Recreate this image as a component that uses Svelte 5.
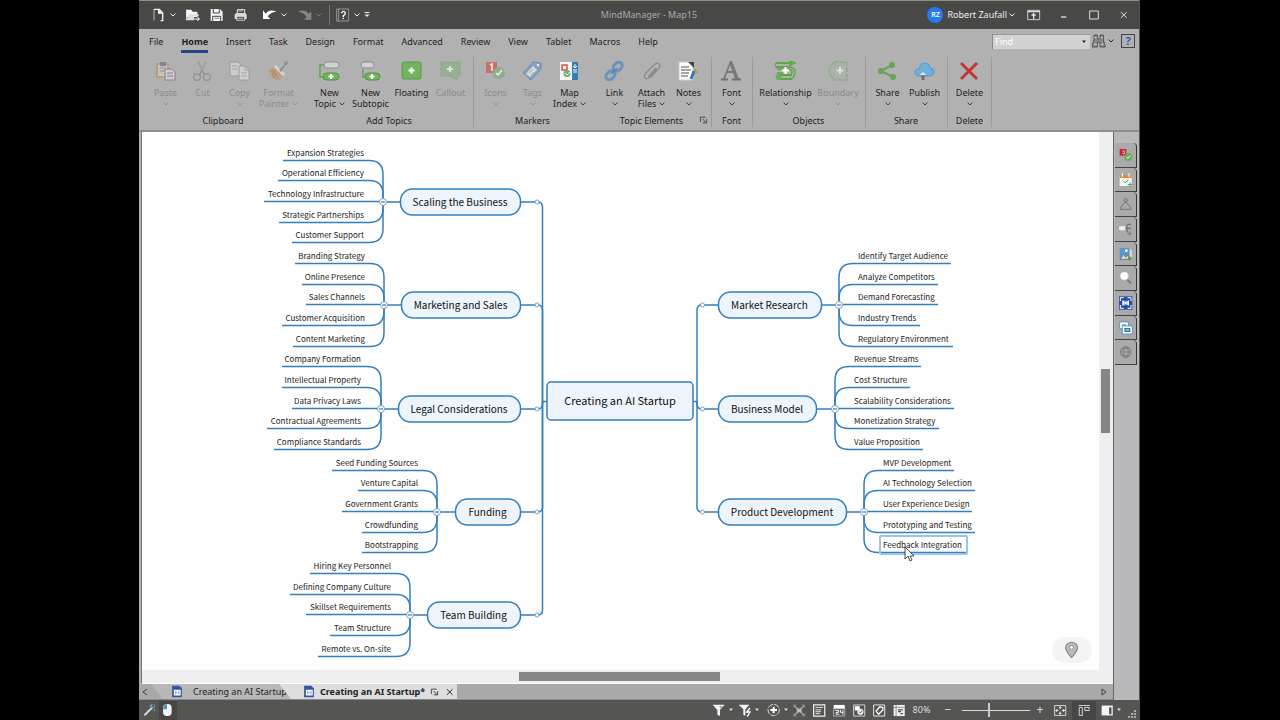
<script>
  const ICONS = {
    newdoc: '<path d="M3 1.500h8l5 5v12h-3" fill="none" stroke="#f4f4f4" stroke-width="2"/><path d="M3 1v17" stroke="#f4f4f4" stroke-width="1"/><path d="M9 1v7h7" fill="#fff"/>',
    open: '<path d="M1 2h7l2 3h7v8H1z" fill="#f4f4f4"/><path d="M1 18l3-9h15v3h-7v6z" fill="#ddd"/><path d="M1 2v16" stroke="#f4f4f4" stroke-width="1.500"/><path d="M12 16h8M17 13l3 3-3 3" fill="none" stroke="#fff" stroke-width="1.500"/>',
    save: '<path d="M1 1h14l4 4v14H1z" fill="#f1f1f1"/><path d="M5 1v6h9V1M4 19v-7h12v7" fill="none" stroke="#484846" stroke-width="1.500"/><path d="M7 15h7" stroke="#484846"/>',
    print: '<path d="M5 8V2h11v6" fill="none" stroke="#eee" stroke-width="1.500"/><path d="M1 9l3-2h13l2 2v7H1z" fill="#d8d8d8"/><path d="M4 12h12v6H4z" fill="#484846" stroke="#fff"/><path d="M5 15h9M7 4h6" stroke="#fff"/>',
    undo: '<path d="M0 3v13h11l-4-4q4-6 13-7-10-5-16 3z" fill="#fff"/>',
    redo: '<path d="M20 17H9l4-4Q9 6 0 5q10-5 16 3l4-3z" fill="#858583"/>',
    helpbox: '<path d="M1 1h18v18H1z" fill="none" stroke="#bbb"/><path d="M4 1v18" stroke="#bbb"/><path d="M8 7q4-5 6 0 0 3-3 4v2M11 14v2" fill="none" stroke="#fff" stroke-width="2"/>',
    paste: '<path d="M1 2h13v15H1z" fill="#b99a70"/><path d="M3 4h9v11H3z" fill="#c9c8c5"/><path d="M5 1h6v4H5z" fill="#77797b"/><path d="M5 7h5M5 10h5" stroke="#8b8b8b"/><path d="M10 8h7l3 3v8H10z" fill="#d5d5d5" stroke="#777b83"/><path d="M12 12h6M12 15h6" stroke="#777b83"/>',
    cut: '<path d="M6 1l6 12M14 1L8 13" stroke="#898989" stroke-width="1.500"/><path d="M6 2l4 7M14 2l-4 7" stroke="#a4a4a4" stroke-width="1"/><circle cx="5" cy="16" r="3.400" fill="none" stroke="#8c8c8c" stroke-width="1.200"/><circle cx="15" cy="16" r="3.400" fill="none" stroke="#8c8c8c" stroke-width="1.200"/>',
    copy: '<path d="M1 1h8l3 3v11H1z" fill="#d3d3d3" stroke="#989898"/><path d="M10 5h6l4 4v10H10z" fill="#d7d7d7" stroke="#989898"/><path d="M16 5v4h4M12 12h6M12 15h6M3 5h5M3 8h5" stroke="#a0a0a0" fill="none"/>',
    painter: '<path d="M1 9l7-3 6 8-2 5H8l-2-3-1 2-2-3 1-2-3-1z" fill="#c09b72"/><path d="M5 9l4 7M4 12l3 6" stroke="#9e7954"/><path d="M7 5l9 9" stroke="#ddd" stroke-width="3"/><path d="M11 9l5-5V1l3-1 1 3-3 2-4 6z" fill="#85898d"/>',
    topic: '<path d="M6 4H1v12h4" fill="none" stroke="#62a54f" stroke-width="1.500"/><rect x="5" y="1" width="15" height="6" rx="3" fill="#d0d2d6" stroke="#8b8d90"/><rect x="4" y="12" width="16" height="7" rx="3.500" fill="#70b35d" stroke="#4c973a"/><path d="M12 13v5M9.500 15.500h5" stroke="#fff" stroke-width="2"/>',
    subtopic: '<path d="M3 8v8h4" fill="none" stroke="#62a54f" stroke-width="1.500"/><rect x="1" y="1" width="13" height="6" rx="3" fill="#d0d2d6" stroke="#8b8d90"/><rect x="5" y="12" width="15" height="7" rx="3.500" fill="#70b35d" stroke="#4c973a"/><path d="M12 13v5M9.500 15.500h5" stroke="#fff" stroke-width="2"/>',
    floating: '<rect x="1" y="1" width="19" height="17" rx="2" fill="#71b35e" stroke="#559c43"/><path d="M10.500 6.500v6M7.500 9.500h6" stroke="#fff" stroke-width="2"/>',
    callout: '<path d="M1 1h19v14h-3v4l-7-4H1z" fill="#8fb28a" stroke="#85a881"/><path d="M10 5v6M7 8h6" stroke="#eee" stroke-width="2"/>',
    icons: '<path d="M1 1h11v11H1z" fill="#c8605e"/><path d="M5 4l2-1v7" fill="none" stroke="#fff" stroke-width="1.500"/><circle cx="14" cy="12" r="6" fill="#86ad80"/><path d="M11 12l2 2 4-5" fill="none" stroke="#fff" stroke-width="1.500"/>',
    tags: '<path d="M1 12L11 1l8 1v6L9 19z" fill="#7da0c0" stroke="#5689b6"/><path d="M4 13l7-8 4 4-7 7z" fill="#e3e4e6"/><circle cx="16" cy="4" r="1.200" fill="#fff"/><path d="M7 12l4-4M9 14l3-3" stroke="#a4aaaf"/>',
    index: '<path d="M1 1h12v18H1z" fill="#f5f5f5"/><path d="M13 1h6v18h-6z" fill="#337eb3"/><path d="M3 4h5v5H3z" fill="none" stroke="#cf5540" stroke-width="1.500"/><circle cx="8" cy="12.500" r="3.500" fill="#78aa78"/><path d="M6 12l2 2 3-3M16 3v4M14 5l2 2 2-2M14 9h4M14 11h4" fill="none" stroke="#fff"/>',
    link: '<g fill="none" stroke="#6894bb" stroke-width="3"><rect x="9" y="2" width="10" height="7" rx="3.500" transform="rotate(-45 14 6)"/><rect x="1" y="11" width="10" height="7" rx="3.500" transform="rotate(-45 6 14)"/></g><path d="M7 13l6-6" stroke="#4f83b4" stroke-width="1.500"/>',
    clip: '<path d="M16 8l-7 8q-3 3-5 1t1-5l9-9q2-2 4 0t0 4l-8 9q-2 1-2-1l7-8" fill="none" stroke="#898989" stroke-width="1.200"/>',
    notes: '<path d="M1 1h10l4 4v14H1z" fill="#fbfbfb" stroke="#ccc"/><path d="M10 1l6 6v-6z" fill="#444"/><path d="M3 6h8M3 9h10M3 12h8M3 15h7" stroke="#555" stroke-width="1"/><path d="M16 10l-3 8" stroke="#2e7bbd" stroke-width="3"/><path d="M16 8l3 4" stroke="#cb8d34" stroke-width="2"/>',
    font: '<path d="M9 0h2l7 18h-4l-2-6H6l-2 6H2zM7 10h4L9 4z" fill="#77787a" fill-rule="evenodd"/><path d="M0 18.500h7M11 18.500h9" stroke="#707070" stroke-width="2"/>',
    relation: '<path d="M1 2h16M1 6h12M5 14h12M5 18h12" stroke="#5da945" stroke-width="2"/><path d="M1 2q-2 2 0 4M16 2l-1-2 5 2-5 2zM13 6q7 0 7 5 0 6-5 7M13 8q4 0 4 3t-3 3M2 8h6M2 12h6" fill="none" stroke="#5da945" stroke-width="1.500"/><circle cx="3.500" cy="16" r="3" fill="#6dad58"/><path d="M10.500 6v7M7 9.500h7" stroke="#fff" stroke-width="2"/>',
    boundary: '<path d="M6 1h13v18H6L1 12V8z" fill="#a9b3a7" stroke="#8caa86" stroke-width="1.500" stroke-dasharray="5 1"/><path d="M12 6v7M8.500 9.500h7" stroke="#eee" stroke-width="2"/>',
    share: '<path d="M15 4L4 10l12 6" fill="none" stroke="#67a456" stroke-width="2"/><circle cx="15" cy="4" r="3" fill="#67a456"/><circle cx="4" cy="10" r="3" fill="#67a456"/><circle cx="16" cy="16" r="3" fill="#67a456"/>',
    publish: '<path d="M5 15q-5-1-4-4 0-3 4-3 1-6 6-6 4 0 5 5 4 0 4 4t-5 4z" fill="#72aedc" stroke="#5296ce"/><path d="M9 19v-6" stroke="#707070" stroke-width="3"/><path d="M6 14l3-3 3 3" fill="#eee"/>',
    del: '<path d="M2 2l16 16M18 2L2 18" stroke="#c23735" stroke-width="3"/>',
    panelIcons: '<path d="M1 1h10v10H1z" fill="#c42632"/><path d="M5 4h3v4H5" fill="none" stroke="#fff"/><circle cx="14" cy="13" r="6" fill="#6dac58"/><path d="M11 13l2 2 4-4" stroke="#fff" stroke-width="1.500" fill="none"/>',
    panelTask: '<path d="M1 4h18v15H1z" fill="#f5f5f5"/><path d="M1 3h18v4H1z" fill="#e08a3c"/><path d="M5 0v5M15 0v5" stroke="#eee" stroke-width="2"/><path d="M6 11l3 3 5-4M13 17h7M16.500 14v6" fill="none" stroke="#4f9a44" stroke-width="1.500"/>',
    panelPerson: '<circle cx="10" cy="4" r="2.500" fill="none" stroke="#777" stroke-width="1.500"/><path d="M9 7L2 16v2h16v-2L11 7z" fill="none" stroke="#777" stroke-width="1.500"/>',
    panelParts: '<rect x="0" y="6" width="10" height="6" rx="2" fill="#eee"/><path d="M9 9h3M18 3h-4q-2 0-2 3v6q0 3 2 3M13 9h5" fill="none" stroke="#737373" stroke-width="2"/><path d="M13 17h6M16 14v6" stroke="#4f9a44" stroke-width="1.500"/>',
    panelLibrary: '<path d="M1 1h14v17H1z" fill="#5598cd"/><path d="M2 18l5-8 3 5 3-3 3 6z" fill="#ddd" stroke="#666"/><circle cx="11" cy="5" r="2" fill="#fff"/><path d="M18 4v10" stroke="#eee" stroke-width="2"/><path d="M13 17h6M16 14v6" stroke="#4f9a44" stroke-width="1.500"/>',
    search: '<path d="M12 12l6 6" stroke="#777" stroke-width="3"/><circle cx="8" cy="7" r="6" fill="#fff" stroke="#ddd"/>',
    panelMap: '<path d="M0 0h20v20H0z" fill="#2b4caa"/><path d="M5 6l5 2 5-2v8l-5-2-5 2z" fill="#fff"/><path d="M8 6v8M12 6v8" stroke="#7b9adb"/><path d="M2 7V2h5M13 2h5v5M18 13v5h-5M7 18H2v-5" fill="none" stroke="#fff" stroke-width="1.500"/>',
    panelWindows: '<path d="M1 1h13v10H1z" fill="#fff" stroke="#2d7dac"/><path d="M4 4h7v4H4z" fill="#8fbcd6"/><path d="M5 7h15v12H5z" fill="#fff" stroke="#2d7dac"/><path d="M8 10h9v6H8z" fill="#2d7dac"/><path d="M10 13h5" stroke="#e8f4fa" stroke-width="1.500"/>',
    globe: '<g fill="none" stroke="#7c7c7c" stroke-width="1.500"><circle cx="10" cy="10" r="8"/><ellipse cx="10" cy="10" rx="4" ry="8"/><path d="M2 10h16M4 5h12M4 15h12"/></g>',
    doc: '<path d="M2 0h12l5 4v16H2z" fill="#3552ad"/><path d="M5 7h12v10H5z" fill="#fff"/><path d="M7 8v8l4-4zM15 8v8l-4-4z" fill="#9db2e3"/>',
    wand: '<path d="M2 18L14 6" stroke="#ddd" stroke-width="3"/><path d="M13 1v5h5M10 3l2 2M16 9l2 2M16 2l2 1" stroke="#7198ac" fill="none" stroke-width="2"/>',
    mouse: '<rect x="3" y="1" width="13" height="18" rx="6" fill="#f4f4f4"/><path d="M9 1q-6 0-6 8h6z" fill="#4e93bd"/>',
    filter: '<path d="M1 2h18l-7 8v9l-4-2v-7z" fill="#f3f3f3"/><path d="M11 4h6l-4 5" fill="#aaa"/>',
    filter2: '<path d="M1 2h16l-6 7v10l-3-2V9z" fill="#f3f3f3"/><path d="M18 7l-5 6h5l-4 7" fill="none" stroke="#fff" stroke-width="2"/>',
    target: '<circle cx="10" cy="10" r="8.500" fill="none" stroke="#ddd" stroke-width="1.500" stroke-dasharray="8 2"/><path d="M10 5v10M5 10h10" stroke="#fff" stroke-width="3"/>',
    viewMap: '<path d="M2 2l16 16M18 2L2 18" stroke="#aaa" stroke-width="2"/><path d="M6 7h8v6H6z" fill="#bbb"/><path d="M1 6V1h5M14 1h5v5M19 14v5h-5M6 19H1v-5" fill="none" stroke="#999"/>',
    outline: '<path d="M1 1h18v18H1z" fill="none" stroke="#eee" stroke-width="2"/><path d="M4 5h12M4 9h9M4 12h9M4 15h7" stroke="#eee" stroke-width="1.500"/>',
    calendar: '<path d="M1 1h18v6H1z" fill="#fff"/><path d="M1 7h18v12H1z" fill="none" stroke="#ddd"/><path d="M4 10h5v3H5v3h5M12 9v4h4M16 9v8" fill="none" stroke="#fff" stroke-width="1.500"/>',
    iconView: '<path d="M1 1h18v18H1z" fill="none" stroke="#ddd" stroke-width="1.500"/><path d="M3 3h8v7H3z" fill="#fff"/><circle cx="12" cy="12" r="5" fill="#eee"/><path d="M10 12l2 2 3-4" stroke="#555" fill="none" stroke-width="1.500"/>',
    tagView: '<path d="M1 1h18v18H1z" fill="none" stroke="#eee" stroke-width="1.500"/><path d="M5 11l6-7 5 1v4l-7 7z" fill="#555" stroke="#fff" stroke-width="2"/>',
    gantt: '<path d="M1 1h18v18H1z" fill="#eee"/><path d="M1 5h18M5 1v18" stroke="#666"/><path d="M8 9h8M8 12h5M12 15h4" stroke="#555" stroke-width="2"/>',
    fit: '<path d="M1 2h18v16H1z" fill="none" stroke="#ddd" stroke-width="1.500"/><path d="M10 4v4M8 6l2-2 2 2M10 16v-4M8 14l2 2 2-2M3 10h4M5 8l-2 2 2 2M17 10h-4M15 8l2 2-2 2" fill="none" stroke="#fff" stroke-width="1.500"/>',
    align: '<path d="M1 2h18M2 5h5v13H2zM11 5h7v5h-7z" fill="none" stroke="#ddd" stroke-width="1.500"/>',
    pane: '<path d="M1 2h18v16H1z" fill="#f5f5f5"/><path d="M13 5h4v11h-4z" fill="#555"/>',
    ribbonDisplay: '<path d="M1 3h18v14H1z" fill="none" stroke="#ccc" stroke-width="1.500"/><path d="M1 5h18M10 16V8M7 11l3-3 3 3" fill="none" stroke="#ddd" stroke-width="2"/>',
    minimize: '<path d="M6 13h8" stroke="#ddd" stroke-width="2"/>',
    maximize: '<path d="M4 4h13v12H4z" fill="none" stroke="#ddd" stroke-width="1.500"/>',
    close: '<path d="M4 4l12 12M16 4L4 16" stroke="currentColor" stroke-width="2"/>',
    binoculars: '<path d="M3 1h5v6h4V1h5v7l3 11h-8v-7H8v7H0L3 8z" fill="#888" stroke="#555" stroke-width="1.500"/><path d="M3 15h4M13 15h4M4 5h3M13 5h3" stroke="#ddd" stroke-width="1.500"/>',
    launcher: '<path d="M3 14V4h11M8 8l7 8M16 8v8H8" fill="none" stroke="#444" stroke-width="2"/>',
    pin: '<path d="M10 19Q3 11 3 7a7 6 0 0 1 14 0q0 4-7 12z" fill="#b9b9b9" stroke="#818181" stroke-width="1.200"/><circle cx="10" cy="7" r="2.200" fill="#fff" stroke="#888"/>'
  };

  const menus = ['File', 'Home', 'Insert', 'Task', 'Design', 'Format', 'Advanced', 'Review', 'View', 'Tablet', 'Macros', 'Help'];

  const b = (icon, lines, opts = {}) => ({ icon, lines, size: 's', drop: true, off: false, ...opts });
  const groups = [
    { name: 'Clipboard', buttons: [b('paste', ['Paste'], { off: true }), b('cut', ['Cut'], { off: true, drop: false }), b('copy', ['Copy'], { off: true }), b('painter', ['Format', 'Painter'], { off: true, size: 'm' })] },
    { name: 'Add Topics', buttons: [b('topic', ['New', 'Topic'], { size: 'm' }), b('subtopic', ['New', 'Subtopic'], { drop: false, size: 'm' }), b('floating', ['Floating'], { drop: false, size: 'm' }), b('callout', ['Callout'], { off: true, drop: false })] },
    { name: 'Markers', ruled: true, buttons: [b('icons', ['Icons'], { off: true }), b('tags', ['Tags'], { off: true }), b('index', ['Map', 'Index'])] },
    { name: 'Topic Elements', launcher: true, buttons: [b('link', ['Link']), b('clip', ['Attach', 'Files']), b('notes', ['Notes'])] },
    { name: 'Font', ruled: true, tight: true, buttons: [b('font', ['Font'])] },
    { name: 'Objects', ruled: true, buttons: [b('relation', ['Relationship'], { size: 'xl' }), b('boundary', ['Boundary'], { off: true, size: 'l' })] },
    { name: 'Share', ruled: true, buttons: [b('share', ['Share']), b('publish', ['Publish'])] },
    { name: 'Delete', ruled: true, buttons: [b('del', ['Delete'])] }
  ];

  // Every leaf sits on one shared row grid; `first` is the row of a branch's top leaf.
  const rowY = (k) => 160.5 + Math.floor((k * 62) / 3);
  const branches = [
    { side: -1, first: 0, title: 'Scaling the Business', pill: [400, 520], spine: 383, text: 364, leaves: [['Expansion Strategies', 283], ['Operational Efficiency', 278], ['Technology Infrastructure', 264], ['Strategic Partnerships', 279], ['Customer Support', 292]] },
    { side: -1, first: 5, title: 'Marketing and Sales', pill: [401, 520], spine: 384, text: 365, leaves: [['Branding Strategy', 295], ['Online Presence', 302], ['Sales Channels', 306], ['Customer Acquisition', 282], ['Content Marketing', 293]] },
    { side: -1, first: 10, title: 'Legal Considerations', pill: [398, 520], spine: 381, text: 361, leaves: [['Company Formation', 282], ['Intellectual Property', 282], ['Data Privacy Laws', 292], ['Contractual Agreements', 267], ['Compliance Standards', 274]] },
    { side: -1, first: 15, title: 'Funding', pill: [455, 520], spine: 437, text: 418, leaves: [['Seed Funding Sources', 332], ['Venture Capital', 358], ['Government Grants', 342], ['Crowdfunding', 362], ['Bootstrapping', 362]] },
    { side: -1, first: 20, title: 'Team Building', pill: [427, 520], spine: 410, text: 391, leaves: [['Hiring Key Personnel', 310], ['Defining Company Culture', 290], ['Skillset Requirements', 306], ['Team Structure', 330], ['Remote vs. On-site', 318]] },
    { side: 1, first: 5, title: 'Market Research', pill: [718, 821], spine: 839, text: 858, leaves: [['Identify Target Audience', 951], ['Analyze Competitors', 938], ['Demand Forecasting', 938], ['Industry Trends', 920], ['Regulatory Environment', 953]] },
    { side: 1, first: 10, title: 'Business Model', pill: [718, 816], spine: 835, text: 854, leaves: [['Revenue Streams', 921], ['Cost Structure', 910], ['Scalability Considerations', 954], ['Monetization Strategy', 939], ['Value Proposition', 923]] },
    { side: 1, first: 15, title: 'Product Development', pill: [718, 846], spine: 864, text: 883, leaves: [['MVP Development', 954], ['AI Technology Selection', 975], ['User Experience Design', 972], ['Prototyping and Testing', 975], ['Feedback Integration', 966]] }
  ];
  const trunkX = (side) => (side < 0 ? 542.5 : 697);
  const branchY = (br) => rowY(br.first + 2) + 0.5;

  function leafPath(br, i) {
    const y = rowY(br.first + i);
    const end = br.leaves[i][1];
    const mid = branchY(br);
    if (i === 2) return `M${end} ${y}H${br.spine}`;
    const r = 14;
    const s = y < mid ? 1 : -1;
    return `M${end} ${y}H${br.spine + br.side * r}Q${br.spine} ${y} ${br.spine} ${y + s * r}V${mid}`;
  }
  function trunkPath(br) {
    const y = branchY(br);
    const t = trunkX(br.side);
    const edge = br.side < 0 ? br.pill[1] : br.pill[0];
    const s = y < 401 ? 1 : -1;
    return `M${edge} ${y}H${t + br.side * 5}Q${t} ${y} ${t} ${y + s * 5}V401`;
  }

  const panels = [['panelIcons', 'Icons'], ['panelTask', 'Task info'], ['panelPerson', 'Resources'], ['panelParts', 'Map parts'], ['panelLibrary', 'Library'], ['search', 'Search'], ['panelMap', 'Power filter'], ['panelWindows', 'My maps'], ['globe', 'Browser']];
  const views = [['viewMap', 'Map view'], ['outline', 'Outline view'], ['calendar', 'Schedule view'], ['iconView', 'Icon view'], ['tagView', 'Tag view'], ['gantt', 'Gantt view']];
  let zoom = $state(40);
</script>

{#snippet icon(name, cls = '')}
  <svg class="icon {cls}" viewBox="0 0 21 20" aria-hidden="true">{@html ICONS[name]}</svg>
{/snippet}
{#snippet chev()}
  <svg class="chev" viewBox="0 0 6 4" aria-hidden="true"><path d="M0.500 0.500L3 3L5.500 0.500" fill="none" stroke="currentColor" /></svg>
{/snippet}
{#snippet caret()}
  <svg class="chev" viewBox="0 0 6 4" aria-hidden="true"><path d="M1 0.500h4L3 3z" fill="currentColor" /></svg>
{/snippet}

<div class="desktop">
  <div class="window">
    <header class="titlebar">
      <div class="quick">
        <button aria-label="New">{@render icon('newdoc')}{@render chev()}</button>
        <button aria-label="Open">{@render icon('open')}</button>
        <button aria-label="Save">{@render icon('save')}</button>
        <button aria-label="Print">{@render icon('print')}</button>
        <button class="gap" aria-label="Undo">{@render icon('undo')}{@render chev()}</button>
        <button class="dim" aria-label="Redo">{@render icon('redo')}{@render chev()}</button>
        <button class="ruled" aria-label="Help">{@render icon('helpbox')}{@render chev()}</button>
        <button class="more" aria-label="Customize">
          <svg class="custom" viewBox="0 0 6 6" aria-hidden="true"><path d="M0.500 0.500h5" stroke="currentColor" /><path d="M0.500 2.500h5L3 5z" fill="currentColor" /></svg>
        </button>
      </div>
      <div class="title">MindManager - Map15</div>
      <div class="account">
        <button class="user"><span class="avatar">RZ</span>Robert Zaufall{@render chev()}</button>
        <button class="win" aria-label="Ribbon display">{@render icon('ribbonDisplay')}</button>
        <button class="win" aria-label="Minimize">{@render icon('minimize')}</button>
        <button class="win" aria-label="Maximize">{@render icon('maximize')}</button>
        <button class="win" aria-label="Close">{@render icon('close', 'small')}</button>
      </div>
    </header>

    <nav class="menubar">
      {#each menus as m}
        <button class:active={m === 'Home'}>{m}</button>
      {/each}
      <div class="find">
        <input type="text" placeholder="Find" aria-label="Find" />
        <button class="combo" aria-label="Search history">{@render caret()}</button>
        <button class="bino" aria-label="Find options">{@render icon('binoculars')}{@render chev()}</button>
        <button class="help" aria-label="Help">?</button>
      </div>
    </nav>

    <section class="ribbon">
      {#each groups as g}
        <div class="group" class:ruled={g.ruled} class:tight={g.tight}>
          <div class="buttons">
            {#each g.buttons as t}
              <button class="tool {t.size}" disabled={t.off}>
                {@render icon(t.icon)}
                <span class="label">{t.lines[0]}</span>
                <span class="label second">{t.lines[1] ?? ''}{#if t.drop}{@render chev()}{/if}</span>
              </button>
            {/each}
          </div>
          <div class="caption">{g.name}</div>
          {#if g.launcher}<button class="launcher" aria-label="Topic element options">{@render icon('launcher')}</button>{/if}
        </div>
      {/each}
    </section>

    <main class="work">
      <div class="canvas">
        <svg class="map" width="957" height="537" viewBox="142 133 957 537" role="img" aria-label="Creating an AI Startup mind map">
          <g class="lines">
            {#each branches as br}
              {@const y = branchY(br)}
              {#each br.leaves as leaf, i}<path d={leafPath(br, i)} />{/each}
              <path d={trunkPath(br)} />
              <path d="M{br.spine} {y}H{br.side < 0 ? br.pill[0] : br.pill[1]}" />
            {/each}
            <path d="M542 401.500H547M693 401.500H697" />
          </g>
          {#each branches as br}
            {@const y = branchY(br)}
            <rect class="topic" x={br.pill[0] + 0.5} y={y - 13} width={br.pill[1] - br.pill[0]} height="26" rx="12" />
            <text class="branch" x={(br.pill[0] + br.pill[1]) / 2} y={y + 4} text-anchor="middle">{br.title}</text>
            <circle class="ring" cx={br.side < 0 ? 537 : 702.5} cy={y} r="2" />
            <circle class="toggle" cx={br.spine} cy={y} r="3.500" />
            <path class="minus" d="M{br.spine - 2} {y}h4" />
            {#each br.leaves as leaf, i}
              <text class="leaf" x={br.text} y={rowY(br.first + i) - 4.5} text-anchor={br.side < 0 ? 'end' : 'start'}>{leaf[0]}</text>
            {/each}
          {/each}
          <rect class="topic" x="547" y="382" width="146" height="38" rx="4" />
          <text class="root" x="620" y="405" text-anchor="middle">Creating an AI Startup</text>
          <rect class="selected" x="880" y="536" width="87" height="18" rx="1" />
          <path d="M905 547v12l3-3 2 5 2-1-2-4h4z" fill="#fff" stroke="#222" stroke-width="0.800" />
        </svg>
        <button class="locate" aria-label="Locate">{@render icon('pin')}</button>
      </div>
      <div class="vscroll"><div class="thumb"></div></div>
      <div class="hscroll"><div class="thumb"></div></div>
      <aside class="panels">
        <div class="stack">
          {#each panels as p}
            <button aria-label={p[1]}>{@render icon(p[0])}</button>
          {/each}
        </div>
      </aside>
      <div class="tabs">
        <button class="prev" aria-label="Previous tab"><svg viewBox="0 0 6 8"><path d="M5 1L1 4l4 3" fill="none" stroke="#444" /></svg></button>
        <button class="tab">{@render icon('doc')}<span>Creating an AI Startup</span></button>
        <div class="tab current">
          {@render icon('doc')}<span>Creating an AI Startup*</span>
          <button class="pop" aria-label="Detach">{@render icon('launcher', 'small')}</button>
          <button class="pop" aria-label="Close tab">{@render icon('close', 'small')}</button>
        </div>
        <button class="next" aria-label="Next tab"><svg viewBox="0 0 6 8"><path d="M1 1v6l4-3z" fill="none" stroke="#444" /></svg></button>
      </div>
    </main>

    <footer class="status">
      <button aria-label="Presentation">{@render icon('wand')}</button>
      <button class="pressed" aria-label="Mouse mode">{@render icon('mouse')}</button>
      <div class="tools">
        <button aria-label="Filter">{@render icon('filter')}{@render caret()}</button>
        <button aria-label="Quick filter">{@render icon('filter2')}{@render caret()}</button>
        <button class="focus" aria-label="Focus">{@render icon('target')}{@render caret()}</button>
        {#each views as v}<button class="view" aria-label={v[1]}>{@render icon(v[0])}</button>{/each}
        <span class="percent">80%</span>
        <button class="step" aria-label="Zoom out">−</button>
        <input type="range" min="0" max="100" bind:value={zoom} aria-label="Zoom" />
        <button class="step in" aria-label="Zoom in">+</button>
        <button class="view" aria-label="Fit map">{@render icon('fit')}</button>
        <button class="view pressed" aria-label="Align">{@render icon('align')}</button>
        <button class="view panes" aria-label="Task panes">{@render icon('pane')}{@render caret()}</button>
        <svg class="grip" viewBox="0 0 8 8" aria-hidden="true"><path d="M6 0h2v2H6zM3 3h2v2H3zM6 3h2v2H6zM0 6h2v2H0zM3 6h2v2H3zM6 6h2v2H6z" fill="#aaa" /></svg>
      </div>
    </footer>
  </div>
</div>

<style>
  :global(body) { background: #000; }
  * { box-sizing: border-box; }
  button { margin: 0; padding: 0; border: 0; background: none; color: inherit; font: inherit; display: flex; align-items: center; justify-content: center; white-space: nowrap; }
  .desktop { min-height: 100vh; padding: 0 140px 0 139px; display: flex; background: #000; font-family: "Noto Sans", "Open Sans", sans-serif; font-size: 9px; line-height: 12px; color: #222; }
  .window { flex: 1; min-width: 0; display: flex; flex-direction: column; background: #b1b1b2; border-right: 1px solid #55554a; }
  .icon { display: block; width: 14px; height: 14px; flex: none; }
  .icon.small { width: 10px; height: 10px; }
  .chev { width: 6px; height: 4px; flex: none; }

  .titlebar { height: 29px; display: grid; grid-template-columns: 1fr auto 1fr; align-items: center; background: #484846; border-top: 1px solid #8b927c; color: #eee; }
  .quick { display: flex; align-items: center; padding-left: 13px; height: 20px; gap: 10px; }
  .quick button { height: 20px; gap: 4px; }
  .quick .gap { margin-left: 5px; }
  .quick .dim { color: #777; margin-left: 1px; }
  .quick .ruled { border-left: 1px solid #777; padding-left: 6px; margin-left: -3px; }
  .quick .more { margin-left: -6px; }
  .custom { width: 6px; height: 6px; }
  .title { color: #aaa; padding-left: 20px; }
  .account { display: flex; justify-content: flex-end; align-items: center; }
  .user { gap: 4px; margin-right: 4px; }
  .avatar { width: 16px; height: 16px; border-radius: 50%; background: #2879ee; color: #fff; font-size: 7px; line-height: 16px; font-weight: 600; }
  .user .chev { margin-left: -2px; }
  .win { width: 30px; height: 24px; }

  .menubar { height: 28px; display: flex; align-items: center; padding: 0 0 2px 2px; gap: 2px; }
  .menubar > button { height: 22px; padding: 0 8px; border-bottom: 3px solid transparent; border-top: 3px solid transparent; }
  .menubar > button.active { font-weight: 700; border-bottom-color: #24457e; margin: 0 8px; padding: 0; }
  .find { margin-left: auto; display: flex; align-items: center; height: 16px; padding-right: 4px; margin-bottom: 2px; }
  .find input { width: 86px; height: 15px; border: 0; border-top: 1px solid #999; border-left: 1px solid #888; background: #d2d2d2; padding: 0 2px; font: inherit; border-radius: 0; }
  .find input::placeholder { color: #fff; opacity: 1; }
  .combo { width: 12px; height: 15px; background: #d2d2d2; border-top: 1px solid #999; }
  .bino { gap: 2px; margin: 0 7px 0 2px; }
  .help { width: 14px; height: 14px; border: 1px solid #444; color: #2668b0; font-size: 11px; font-weight: 700; }

  .ribbon { height: 75px; display: flex; padding: 0 4px 3px; border-bottom: 2px solid #8f8f8f; }
  .group { position: relative; padding: 0 4px; display: flex; flex-direction: column; }
  .group:first-child { padding-right: 6px; }
  .group.tight { padding: 0 2px; }
  .group.ruled::before, .group:last-child::after { content: ""; position: absolute; left: 0; top: 0; bottom: 0; width: 1px; background: #999; }
  .group:last-child::after { left: auto; right: 0; }
  .buttons { display: flex; }
  .tool { width: 37px; height: 54px; flex-direction: column; justify-content: flex-start; padding-top: 4px; }
  .tool .icon { width: 21px; height: 20px; margin-bottom: 6px; }
  .tool.m { width: 41px; }
  .tool.l { width: 46px; }
  .tool.xl { width: 59px; }
  .tool:disabled { color: #8b8b8b; }
  .tool:disabled .icon { opacity: 0.8; }
  .tool .chev { opacity: 0.8; }
  .label { height: 11px; line-height: 12px; display: flex; align-items: center; gap: 3px; }
  .caption { text-align: center; line-height: 14px; padding-top: 3px; }
  .launcher { position: absolute; right: 2px; bottom: 2px; }
  .launcher .icon { width: 10px; height: 10px; }

  .work { flex: 1; min-height: 0; display: grid; grid-template-columns: 1fr 14px 26px; grid-template-rows: 1fr 14px 16px; }
  .canvas { position: relative; margin-left: 2px; border-left: 1px solid #777; background: #fefefe; min-width: 0; overflow: hidden; display: flex; justify-content: center; align-items: center; }
  .map { display: block; flex: none; font-family: "Noto Sans CJK SC", "Noto Sans", sans-serif; }
  .lines path { fill: none; stroke: #347fbf; stroke-width: 1.5; }
  .topic { fill: #edf4fb; stroke: #347fbf; stroke-width: 1.5; }
  .leaf { font-size: 8px; fill: #222; }
  .branch { font-size: 10px; fill: #111; }
  .root { font-size: 11px; fill: #111; }
  .ring, .toggle { fill: #fff; stroke: #75a3c9; stroke-width: 1; }
  .minus { stroke: #555; fill: none; }
  .selected { fill: none; stroke: #9bc5ee; stroke-width: 2; }
  .locate { position: absolute; right: 7px; bottom: 7px; width: 40px; height: 26px; border-radius: 13px; background: #f4f4f6; }
  .locate .icon { width: 18px; height: 18px; }
  .vscroll { background: #efeff2; position: relative; }
  .vscroll .thumb { width: 9px; height: 12%; margin-left: 2px; position: absolute; top: 44%; background: #858585; }
  .hscroll { grid-row: 2; grid-column: 1 / 3; margin-left: 2px; border-left: 1px solid #777; background: #efeff2; padding: 2px 16px 0 0; border-bottom: 1px solid #fff; }
  .hscroll .thumb { width: 201px; height: 9px; margin: 0 auto; background: #858585; }
  .panels { grid-row: 1 / 4; grid-column: 3; border-left: 1px solid #666; background: #b9b9bb; padding: 11px 3px 0 1px; }
  .stack { height: 222px; display: flex; flex-direction: column; }
  .stack button { flex: 1; width: 22px; background: #aaa; border-right: 1px solid #333; border-bottom: 1px solid #444; border-radius: 0 4px 0 0; }
  .tabs { grid-row: 3; grid-column: 1 / 3; display: flex; background: #a9a9aa; border-bottom: 1px solid #8a8a8a; min-width: 0; }
  .tabs svg:not(.icon) { width: 6px; height: 8px; }
  .prev { width: 12px; }
  .tab { display: flex; align-items: center; justify-content: flex-start; gap: 10px; background: #b8b8b8; padding-left: 20px; width: 144px; clip-path: polygon(0 0, 94% 0, 100% 100%, 12px 100%); }
  .tab.current { width: 178px; margin-left: -16px; gap: 5px; padding-left: 24px; background: #dedede; font-weight: 700; clip-path: polygon(0 0, 100% 0, 100% 100%, 12px 100%); }
  .tab .icon:not(.small) { width: 12px; height: 13px; }
  .tab span { white-space: nowrap; }
  .next { margin-left: auto; width: 18px; }

  .status { height: 20px; display: flex; align-items: center; background: #555553; color: #ddd; padding-left: 2px; }
  .status button { height: 19px; width: 18px; gap: 2px; }
  .status .pressed { background: #464646; }
  .tools { margin-left: auto; display: flex; align-items: center; padding-right: 3px; }
  .tools button { width: 26px; }
  .tools .focus { width: 22px; margin-left: 5px; }
  .tools .view { width: 20px; }
  .tools .view .icon { width: 13px; height: 13px; }
  .percent { width: 25px; text-align: center; }
  .tools .step { width: 28px; font-size: 12px; }
  .tools .step.in { width: 20px; }
  .tools input { appearance: none; width: 68px; height: 15px; margin: 0; background: linear-gradient(#ddd, #ddd) center / 100% 1px no-repeat; }
  .tools input::-webkit-slider-thumb { appearance: none; width: 2px; height: 14px; background: #ccc; }
  .tools .view.pressed { width: 24px; margin: 0 2px; }
  .tools .panes { width: 26px; }
  .grip { width: 8px; height: 8px; align-self: flex-end; margin: 0 0 2px 4px; }
</style>
